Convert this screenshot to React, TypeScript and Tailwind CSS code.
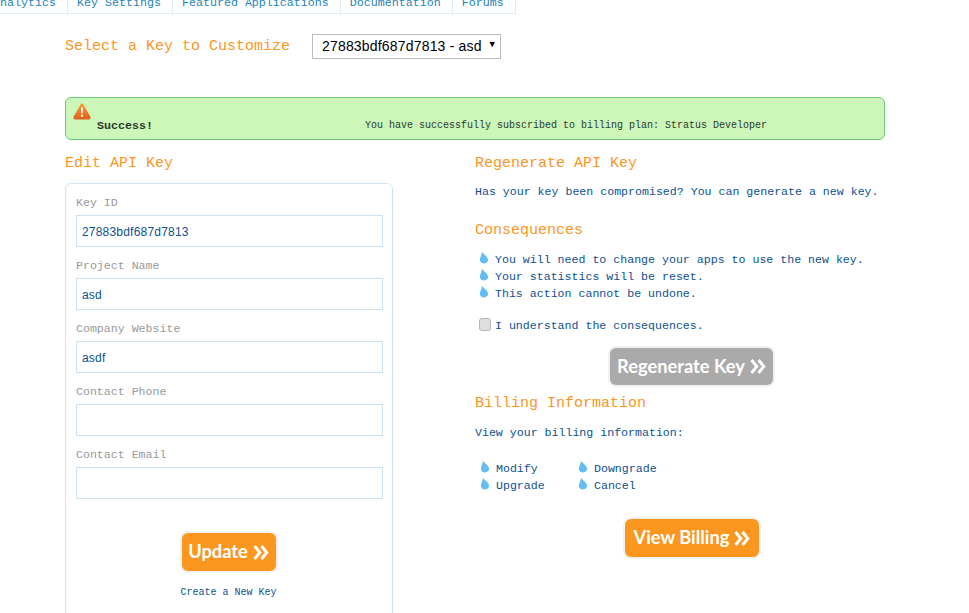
const NAV_ITEMS = ["Analytics", "Key Settings", "Featured Applications", "Documentation", "Forums"];
const FIELDS = [
  { label: "Key ID", value: "27883bdf687d7813" },
  { label: "Project Name", value: "asd" },
  { label: "Company Website", value: "asdf" },
  { label: "Contact Phone", value: "" },
  { label: "Contact Email", value: "" },
];
const CONSEQUENCES = [
  "You will need to change your apps to use the new key.",
  "Your statistics will be reset.",
  "This action cannot be undone.",
];

function Drop() {
  return (
    <svg viewBox="0 0 11 14" width="10" height="13" className="shrink-0 -translate-y-[2px]" aria-hidden>
      <path d="M3.2 0.5C4 3 10 6 10 9.6C10 12 8.2 13.5 5.6 13.5C2.8 13.5 1 11.8 1 9.4C1 6.5 3.4 4 3.2 0.5Z" fill="#62bdf2" />
    </svg>
  );
}

function Chevrons() {
  return (
    <svg viewBox="0 0 16 14" width="16" height="15" aria-hidden>
      <path
        d="M1.5 0.5L6.8 7L1.5 13.5M8.5 0.5L13.8 7L8.5 13.5"
        fill="none"
        stroke="currentColor"
        strokeWidth="3"
      />
    </svg>
  );
}

function Button({ label, className }: { label: string; className: string }) {
  return (
    <button
      type="button"
      className={`flex items-center justify-center gap-[5px] rounded-[6px] font-['Lato',sans-serif] text-[18.3px] font-bold text-white shadow-[0_0_0_2px_#f1f1f1] ${className}`}
    >
      {label}
      <Chevrons />
    </button>
  );
}

function Heading({ children, className = "" }: { children: string; className?: string }) {
  return <h2 className={`text-[15px] leading-[18px] text-[#fb961f] ${className}`}>{children}</h2>;
}

function Item({ children }: { children: string }) {
  return (
    <li className="flex h-[17px] items-center gap-[6px]">
      <Drop />
      <span>{children}</span>
    </li>
  );
}

export default function App() {
  return (
    <div className="h-[613px] overflow-hidden bg-white font-['Liberation_Mono',monospace] text-[11.6px] text-[#0d5191]">
      <nav className="flex h-[14px] items-end overflow-hidden border-b border-[#dcedf5] -ml-[16px] w-[532px]">
        {NAV_ITEMS.map((item) => (
          <span
            key={item}
            className="h-[14px] border-r border-[#dcedf5] pl-[9px] pr-[11px] text-[11.67px] leading-[8px] text-[#2384b8] whitespace-nowrap"
          >
            {item}
          </span>
        ))}
      </nav>

      <div className="px-[65px]">
        <div className="flex items-center pt-[20px]">
          <Heading className="w-[247px]">Select a Key to Customize</Heading>
          <div className="relative">
            <select className="block h-[25px] w-[189px] appearance-none border border-[#bbbbbb] bg-white pl-[9px] font-['Liberation_Sans',sans-serif] text-[14px] tracking-[0.18px] text-black">
              <option>27883bdf687d7813 - asd</option>
            </select>
            <span className="pointer-events-none absolute right-[6px] top-[6px] text-[9px] leading-[10px] text-black">▼</span>
          </div>
        </div>

        <div className="relative mt-[38px] h-[43px] w-[820px] rounded-[6px] border border-[#6cc777] bg-[#ccf7b9] text-[10px] leading-[12px] text-[#2a3a2a]">
          <svg viewBox="0 0 18 17" width="18" height="17" className="absolute left-[7px] top-[5px]" aria-hidden>
            <defs>
              <linearGradient id="warn" x1="0" y1="0" x2="0" y2="1">
                <stop offset="0" stopColor="#f9a03a" />
                <stop offset="1" stopColor="#dc5f1c" />
              </linearGradient>
            </defs>
            <path d="M9 0.5C9.8 0.5 10.2 1 10.6 1.7L17.3 13.6C18 15 17.4 16.5 15.8 16.5H2.2C0.6 16.5 0 15 0.7 13.6L7.4 1.7C7.8 1 8.2 0.5 9 0.5Z" fill="url(#warn)" />
            <path d="M8 4.5H10L9.6 10.5H8.4ZM8 11.8H10V13.8H8Z" fill="#ffffff" />
          </svg>
          <div className="flex pl-[31px] pt-[22px]">
            <strong className="w-[268px] text-[11.67px]">Success!</strong>
            <span>You have successfully subscribed to billing plan: Stratus Developer</span>
          </div>
        </div>

        <div className="flex pt-[15px]">
          <div className="w-[410px]">
            <Heading>Edit API Key</Heading>
            <div className="mt-[10px] h-[500px] w-[328px] rounded-[6px] border border-[#cfe6f2] px-[10px] pt-[12px]">
              {FIELDS.map((field) => (
                <div key={field.label} className="mb-[12px]">
                  <label className="block h-[19px] text-[#999999] leading-[14px]">{field.label}</label>
                  <input
                    readOnly
                    value={field.value}
                    className="block h-[32px] w-[307px] border border-[#c9e4f0] bg-white px-[5px] pt-[2px] font-['Liberation_Sans',sans-serif] text-[12px] tracking-[0.2px] text-[#0d5191]"
                  />
                </div>
              ))}
              <div className="flex flex-col items-center pr-[1px] pt-[22px]">
                <Button label="Update" className="h-[38px] w-[94px] bg-[#fb971f]" />
                <a className="mt-[16px] text-[10px] leading-[12px] text-[#0d5191]">Create a New Key</a>
              </div>
            </div>
          </div>

          <div className="w-[410px]">
            <Heading>Regenerate API Key</Heading>
            <p className="mt-[12px] leading-[14px]">Has your key been compromised? You can generate a new key.</p>

            <Heading className="mt-[23px]">Consequences</Heading>
            <ul className="mt-[11px] pl-[4px]">
              {CONSEQUENCES.map((text) => (
                <Item key={text}>{text}</Item>
              ))}
            </ul>

            <label className="mt-[15px] flex h-[17px] items-center gap-[4px] pl-[4px]">
              <input
                type="checkbox"
                className="h-[13px] w-[12px] -translate-y-[1px] appearance-none rounded-[3px] border border-[#b5b5b5] bg-[#dedede]"
              />
              <span>I understand the consequences.</span>
            </label>

            <div className="mt-[14px] flex w-[433px] justify-center">
              <Button label="Regenerate Key" className="h-[37px] w-[163px] bg-[#aaaaaa]" />
            </div>

            <Heading className="mt-[10px]">Billing Information</Heading>
            <p className="mt-[13px] leading-[14px]">View your billing information:</p>

            <div className="mt-[20px] flex pl-[5px]">
              <ul className="w-[98px]">
                <Item>Modify</Item>
                <Item>Upgrade</Item>
              </ul>
              <ul>
                <Item>Downgrade</Item>
                <Item>Cancel</Item>
              </ul>
            </div>

            <div className="mt-[25px] flex w-[434px] justify-center">
              <Button label="View Billing" className="h-[38px] w-[134px] bg-[#fb971f]" />
            </div>
          </div>
        </div>
      </div>
    </div>
  );
}
